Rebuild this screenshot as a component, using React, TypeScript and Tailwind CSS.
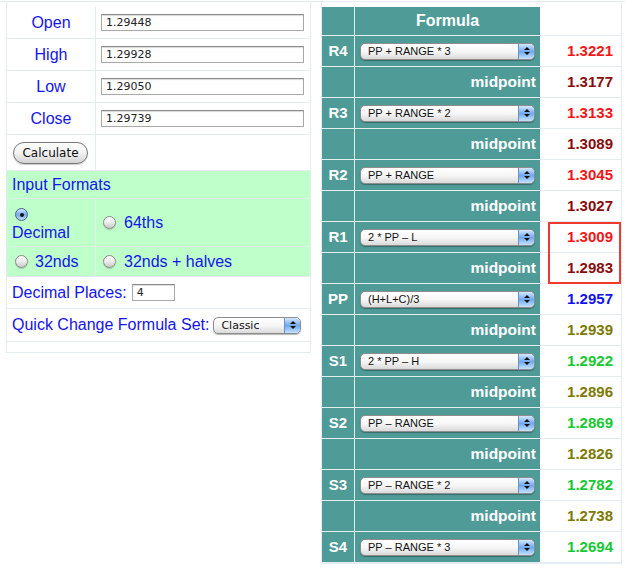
import * as React from "react"

type Row = {
  label?: string
  formula?: string
  value: string
  color: string
}

const RED = "text-[#f41616]"
const DARK = "text-[#8a0b0b]"
const BLUE = "text-[#1212ee]"
const OLIVE = "text-[#7d7a02]"
const GREEN = "text-[#16c932]"

const rows: Row[] = [
  { label: "R4", formula: "PP + RANGE * 3", value: "1.3221", color: RED },
  { value: "1.3177", color: DARK },
  { label: "R3", formula: "PP + RANGE * 2", value: "1.3133", color: RED },
  { value: "1.3089", color: DARK },
  { label: "R2", formula: "PP + RANGE", value: "1.3045", color: RED },
  { value: "1.3027", color: DARK },
  { label: "R1", formula: "2 * PP – L", value: "1.3009", color: RED },
  { value: "1.2983", color: DARK },
  { label: "PP", formula: "(H+L+C)/3", value: "1.2957", color: BLUE },
  { value: "1.2939", color: OLIVE },
  { label: "S1", formula: "2 * PP – H", value: "1.2922", color: GREEN },
  { value: "1.2896", color: OLIVE },
  { label: "S2", formula: "PP – RANGE", value: "1.2869", color: GREEN },
  { value: "1.2826", color: OLIVE },
  { label: "S3", formula: "PP – RANGE * 2", value: "1.2782", color: GREEN },
  { value: "1.2738", color: OLIVE },
  { label: "S4", formula: "PP – RANGE * 3", value: "1.2694", color: GREEN },
]

function Stepper() {
  return (
    <span className="flex h-full w-[16px] flex-col items-center justify-center gap-[2px] rounded-r-[4px] border-l border-[#6b8ec4] bg-linear-to-b from-[#d3e8fd] via-[#6fa9ec] to-[#c4e1fd]">
      <span className="h-0 w-0 border-x-[3px] border-b-[3px] border-x-transparent border-b-[#111]" />
      <span className="h-0 w-0 border-x-[3px] border-t-[3px] border-x-transparent border-t-[#111]" />
    </span>
  )
}

function AquaSelect({ text, className, textClass }: { text: string; className: string; textClass: string }) {
  return (
    <div
      className={`flex h-[17px] items-center overflow-hidden rounded-[5px] border border-[#8d8d8d] bg-linear-to-b from-white via-[#f7f7f7] to-[#dadada] shadow-[0_1px_1px_rgba(0,0,0,0.3)] ${className}`}
    >
      <span className={`flex-1 truncate pl-[7px] leading-none text-[#111] ${textClass}`}>{text}</span>
      <Stepper />
    </div>
  )
}

function Radio({ checked }: { checked?: boolean }) {
  if (checked) {
    return (
      <span className="flex h-[13px] w-[13px] shrink-0 items-center justify-center rounded-full border border-[#44628f] bg-linear-to-b from-[#d6e9fc] via-[#77aeea] to-[#bcdcfa]">
        <span className="h-[4px] w-[4px] rounded-full bg-[#111]" />
      </span>
    )
  }
  return (
    <span className="inline-block h-[13px] w-[13px] shrink-0 rounded-full border border-[#8c8c8c] bg-linear-to-b from-white via-[#ececec] to-[#c9c9c9] shadow-[0_1px_1px_rgba(0,0,0,0.2)]" />
  )
}

function TextInput({ value, className }: { value: string; className: string }) {
  return (
    <input
      readOnly
      value={value}
      className={`h-[17px] border border-[#a9a9a9] border-t-[#8c8c8c] bg-white pl-[4px] font-['DejaVu_Sans',sans-serif] text-[11px] text-[#222] shadow-[inset_0_1px_1px_rgba(0,0,0,0.15)] outline-none ${className}`}
    />
  )
}

function PriceRow({ label, value }: { label: string; value: string }) {
  return (
    <div className="flex h-[32px] border-b border-[#e4ecf2]">
      <div className="flex w-[89px] items-center justify-center border-r border-[#e4ecf2] text-[16px] text-[#1414ee]">
        {label}
      </div>
      <div className="flex flex-1 items-center pl-[5px]">
        <TextInput value={value} className="w-[203px]" />
      </div>
    </div>
  )
}

function LeftPanel() {
  return (
    <div className="ml-[6px] w-[305px] border-x border-b border-[#e4ecf2] pt-[5px]">
      <PriceRow label="Open" value="1.29448" />
      <PriceRow label="High" value="1.29928" />
      <PriceRow label="Low" value="1.29050" />
      <PriceRow label="Close" value="1.29739" />
      <div className="flex h-[36px] border-b border-[#e4ecf2]">
        <div className="flex w-[89px] items-center border-r border-[#e4ecf2] pl-[6px]">
          <button className="h-[22px] w-[75px] rounded-full border border-[#777] bg-linear-to-b from-white via-[#f2f2f2] to-[#d4d4d4] font-['DejaVu_Sans',sans-serif] text-[12px] text-[#111] shadow-[0_1px_1px_rgba(0,0,0,0.2)]">
            Calculate
          </button>
        </div>
        <div className="flex-1" />
      </div>

      <div className="bg-[#bfffca] text-[16px] text-[#1414ee]">
        <div className="flex h-[28px] items-center border-b border-[#dff3e5] pl-[5px]">Input Formats</div>
        <div className="flex h-[48px] border-b border-[#dff3e5]">
          <div className="flex w-[89px] flex-col border-r border-[#dff3e5] pl-[5px] pt-[9px]">
            <div className="h-[16px] pl-[3px]">
              <Radio checked />
            </div>
            <div className="leading-[18px]">Decimal</div>
          </div>
          <div className="flex flex-1 items-center gap-[8px] pl-[7px]">
            <Radio />
            <span>64ths</span>
          </div>
        </div>
        <div className="flex h-[30px] border-b border-[#e4ecf2]">
          <div className="flex w-[89px] items-center gap-[7px] border-r border-[#dff3e5] pl-[8px]">
            <Radio />
            <span>32nds</span>
          </div>
          <div className="flex flex-1 items-center gap-[8px] pl-[7px]">
            <Radio />
            <span>32nds + halves</span>
          </div>
        </div>
      </div>

      <div className="flex h-[32px] items-center border-b border-[#e4ecf2] pl-[5px] text-[16px] text-[#1414ee]">
        <span>Decimal Places:</span>
        <TextInput value="4" className="ml-[5px] w-[43px]" />
      </div>
      <div className="flex h-[33px] items-center border-b border-[#e4ecf2] pl-[5px] text-[16px] text-[#1414ee]">
        <span>Quick Change Formula Set:</span>
        <AquaSelect
          text="Classic"
          className="ml-[4px] w-[88px]"
          textClass="font-['DejaVu_Sans',sans-serif] text-[11px] pl-[6px]"
        />
      </div>
      <div className="h-[10px]" />
    </div>
  )
}

function RightPanel() {
  return (
    <div className="relative ml-[10px] w-[301px] border-x border-b border-[#e4ecf2] pt-[5px]">
      <div className="flex h-[29px]">
        <div className="w-[33px] border-r border-b border-[#e6eff0] bg-[#4f9b98]" />
        <div className="flex w-[185px] items-center justify-center border-b border-[#e6eff0] bg-[#4f9b98] text-[16px] font-bold text-white">
          Formula
        </div>
        <div className="flex-1 border-b border-[#e4ecf2] bg-white" />
      </div>
      {rows.map((r, i) => (
        <div key={i} className="flex h-[31px]">
          <div className="flex w-[33px] items-center justify-center border-r border-b border-[#e6eff0] bg-[#4f9b98] text-[15px] font-bold text-white">
            {r.label}
          </div>
          <div className="flex w-[185px] items-center border-b border-[#e6eff0] bg-[#4f9b98]">
            {r.formula ? (
              <AquaSelect text={r.formula} className="ml-[5px] w-[175px]" textClass="text-[11px]" />
            ) : (
              <span className="ml-auto pr-[4px] text-[15.5px] font-bold text-white">midpoint</span>
            )}
          </div>
          <div className={`flex flex-1 items-center justify-end border-b border-[#e4ecf2] bg-white pr-[8px] text-[15px] font-bold ${r.color}`}>
            {r.value}
          </div>
        </div>
      ))}
      <div className="absolute left-[226px] top-[220px] h-[62px] w-[73px] border-2 border-[#f03a2e]" />
    </div>
  )
}

export default function App() {
  return (
    <div className="h-[568px] w-[625px] overflow-hidden bg-white pt-px font-['Liberation_Sans',Arial,sans-serif]">
      <div className="h-px bg-[#e4ecf2]" />
      <div className="flex items-start">
        <LeftPanel />
        <RightPanel />
      </div>
    </div>
  )
}
